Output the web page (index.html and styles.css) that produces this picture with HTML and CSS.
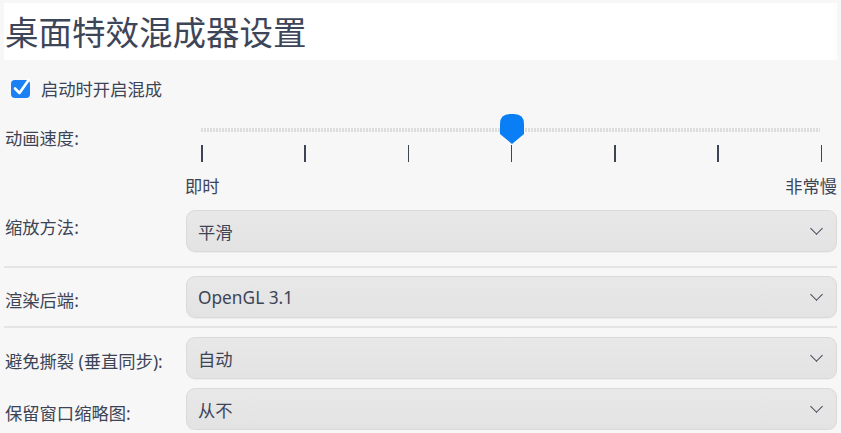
FILE: index.html
```html
<!DOCTYPE html>
<html lang="zh-CN">
<head>
    <meta charset="UTF-8">
    <title>桌面特效混成器设置</title>
    <link rel="stylesheet" href="styles.css">
</head>
<body>
    <div class="title">桌面特效混成器设置</div>

    <label class="check-row">
        <svg class="checkbox" width="22" height="22" viewBox="0 0 22 22">
            <rect x="1" y="3" width="19" height="18" rx="4" fill="#1a80f4"/>
            <path d="M5 11.5 L9.5 16 L19 2.5" fill="none" stroke="#fff" stroke-width="2.6" stroke-linecap="round" stroke-linejoin="round"/>
        </svg>
        <span>启动时开启混成</span>
    </label>

    <div class="form">
        <div class="label slider-label">动画速度:</div>
        <div class="slider">
            <div class="track-area">
                <div class="track"></div>
                <svg class="thumb" width="26" height="31" viewBox="0 0 26 31">
                    <path d="M13 31 L1 21 V11 Q1 1 11 1 H15 Q25 1 25 11 V21 Z" fill="#0a7ff5"/>
                </svg>
            </div>
            <div class="ticks">
                <span></span><span></span><span></span><span></span><span></span><span></span><span></span>
            </div>
            <div class="tick-labels">
                <span>即时</span>
                <span>非常慢</span>
            </div>
        </div>

        <div class="label">缩放方法:</div>
        <div class="combo">平滑<span class="chevron"></span></div>

        <div class="separator"></div>

        <div class="label">渲染后端:</div>
        <div class="combo">OpenGL 3.1<span class="chevron"></span></div>

        <div class="separator sep-b"></div>

        <div class="label">避免撕裂 (垂直同步):</div>
        <div class="combo">自动<span class="chevron"></span></div>

        <div class="label">保留窗口缩略图:</div>
        <div class="combo">从不<span class="chevron"></span></div>
    </div>
</body>
</html>
```

FILE: styles.css
```css
body {
    margin: 0;
    padding: 3px 4px 0 4px;
    background-color: #f7f7f7;
    color: #3c4456;
    font-family: "Noto Sans", "Noto Sans CJK SC", sans-serif;
    font-size: 17.3px;
    overflow: hidden;
}

.title {
    height: 57px;
    line-height: 55px;
    padding-left: 1px;
    background-color: #ffffff;
    font-family: "Noto Sans CJK SC", sans-serif;
    font-size: 33.5px;
    color: #3d4558;
}

.check-row {
    display: flex;
    align-items: center;
    gap: 9px;
    height: 22px;
    margin-top: 17px;
    padding-left: 6px;
}

.form {
    display: grid;
    grid-template-columns: 182px 1fr;
    margin-top: 14px;
}

.label {
    display: flex;
    align-items: center;
    padding: 3px 0 0 1px;
    white-space: nowrap;
}

.slider-label {
    align-items: flex-start;
    margin-top: 9px;
}

.slider {
    display: flex;
    flex-direction: column;
}

.track-area {
    position: relative;
    height: 32px;
}

.track {
    margin: 15px 17px 0 15px;
    height: 4px;
    background: repeating-linear-gradient(90deg, #dddddd 0 2px, transparent 2px 3px);
}

.thumb {
    position: absolute;
    left: calc(50% - 13px);
    top: 0;
}

.ticks {
    display: flex;
    justify-content: space-between;
    height: 17px;
    padding: 0 15px 0 15px;
}

.ticks span {
    width: 1.5px;
    background-color: #3c4456;
}

.tick-labels {
    display: flex;
    justify-content: space-between;
    margin: 14px 0 0 -1px;
    line-height: 22px;
}

.combo {
    position: relative;
    display: flex;
    align-items: center;
    height: 42px;
    box-sizing: border-box;
    margin-top: 12px;
    padding-left: 11px;
    border: 1px solid #dadada;
    border-radius: 9px;
    background: linear-gradient(#e8e8e8, #e3e3e3);
    box-shadow: 0 1px 0 rgba(0, 0, 0, 0.04);
}

.combo + .label,
.separator + .label {
    margin-top: 12px;
}

.separator {
    grid-column: 1 / -1;
    height: 2px;
    margin-top: 14px;
    margin-bottom: -2px;
    background-color: #e4e4e4;
}

.separator + .label + .combo {
    margin-top: 10px;
}

.sep-b {
    margin-top: 8px;
}

.sep-b + .label + .combo {
    margin-top: 11px;
}

.sep-b + .label + .combo ~ .label + .combo {
    margin-top: 9px;
}

.chevron {
    position: absolute;
    right: 15px;
    top: 13px;
    width: 8px;
    height: 8px;
    border-right: 1.6px solid #3c4456;
    border-bottom: 1.6px solid #3c4456;
    transform: rotate(45deg);
}
```
